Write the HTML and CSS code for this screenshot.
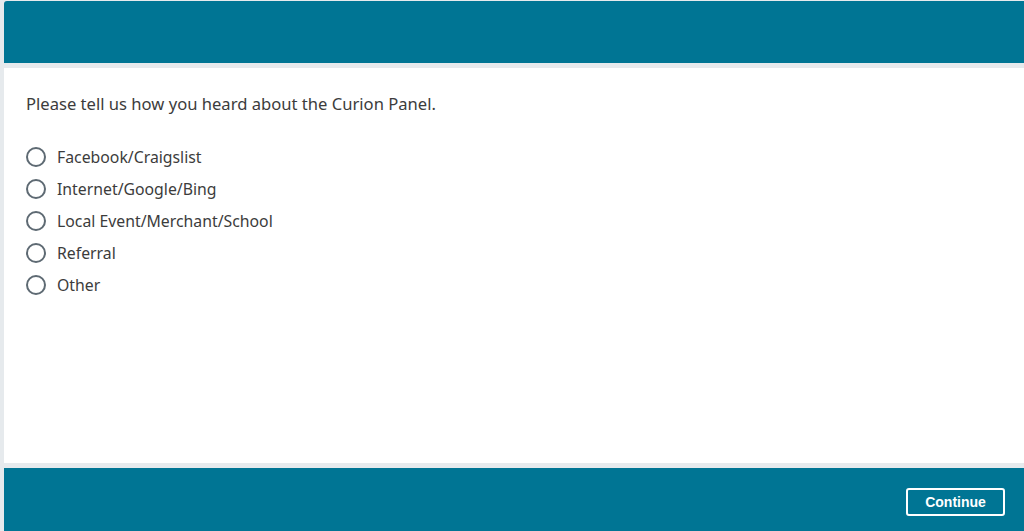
FILE: index.html
```html
<!doctype html>
<html lang="en">

<head>
    <meta charset="UTF-8">
    <title>Curion Panel</title>
    <link rel="stylesheet" href="styles.css">
</head>

<body>
    <div class="page">
        <div class="header"></div>
        <div class="content">
            <p class="question">Please tell us how you heard about the Curion Panel.</p>
            <ul class="choices">
                <li><label><span class="radio"></span>Facebook/Craigslist</label></li>
                <li><label><span class="radio"></span>Internet/Google/Bing</label></li>
                <li><label><span class="radio"></span>Local Event/Merchant/School</label></li>
                <li><label><span class="radio"></span>Referral</label></li>
                <li><label><span class="radio"></span>Other</label></li>
            </ul>
        </div>
        <div class="footer">
            <button type="button" class="btn_continue">Continue</button>
        </div>
    </div>
</body>

</html>
```

FILE: styles.css
```css
* {
    margin: 0;
    padding: 0;
    box-sizing: border-box;
}

html,
body {
    height: 100%;
}

body {
    background-color: #e6eaed;
    font-family: "Noto Sans", "Open Sans", sans-serif;
    color: #3c3c3c;
}

li {
    list-style: none;
}

.page {
    height: 100%;
    padding: 1px 0 0 4px;
    display: flex;
    flex-direction: column;
    gap: 5px;
}

.header {
    height: 62px;
    background-color: #007594;
    border-top-left-radius: 3px;
}

.content {
    flex: 1;
    background-color: #fff;
    padding: 26px 22px;
}

.question {
    font-size: 16.6px;
    line-height: 20px;
    margin-bottom: 33px;
}

.choices li {
    height: 32px;
}

.choices label {
    display: flex;
    align-items: center;
    gap: 11px;
    font-size: 15.8px;
    line-height: 20px;
}

.radio {
    width: 20px;
    height: 20px;
    border: 2.5px solid #5e6a73;
    border-radius: 50%;
}

.footer {
    height: 63px;
    background-color: #007594;
    display: flex;
    justify-content: flex-end;
    align-items: center;
    padding: 4px 19px 0 0;
}

.btn_continue {
    width: 99px;
    height: 28px;
    background: transparent;
    border: 2px solid #fff;
    border-radius: 3px;
    color: #fff;
    font-family: "Liberation Sans", Arial, sans-serif;
    font-weight: bold;
    font-size: 14px;
}
```
